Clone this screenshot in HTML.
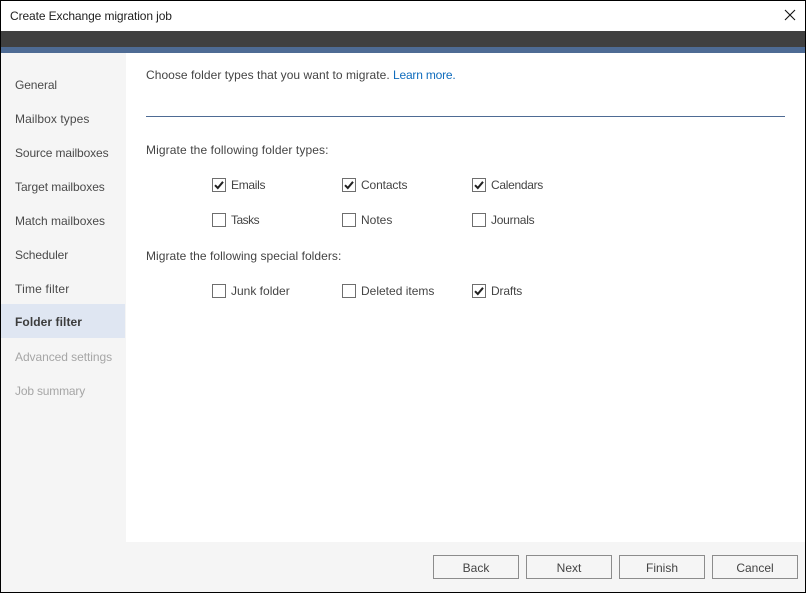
<!DOCTYPE html>
<html>
<head>
<meta charset="utf-8">
<style>
html,body{margin:0;padding:0;background:#fff}
body{width:806px;height:593px;position:relative;overflow:hidden;font-family:"Liberation Sans",sans-serif;font-size:12px;color:#444}
div,span{position:absolute;white-space:nowrap}
.t{line-height:16px;height:16px}
.nav{left:15px;line-height:16px;height:16px;color:#4a4a4a}
.dis{color:#a6a6a6}
.cb{width:12px;height:12px;border:1px solid #6e6e6e;background:#fff}
.cb svg{position:absolute;left:0;top:0}
.btn{top:555px;width:84px;height:22px;border:1px solid #8c8c8c;background:#f5f5f5;text-align:center;line-height:24px;color:#444}
</style>
</head>
<body>
<div style="left:0;top:0;width:804px;height:591px;border:1px solid #000;background:#fff"></div>
<div style="left:1px;top:31px;width:804px;height:16px;background:#404040"></div>
<div style="left:1px;top:47px;width:804px;height:6px;background:#4e6b94"></div>
<div style="left:1px;top:53px;width:125px;height:539px;background:#f5f5f5"></div>
<div style="left:1px;top:542px;width:804px;height:50px;background:#f5f5f5"></div>
<div style="left:1px;top:304px;width:124px;height:34px;background:#dfe6f2"></div>

<div class="t" style="left:10px;top:8px;color:#222;letter-spacing:-0.1px">Create Exchange migration job</div>
<svg style="position:absolute;left:784px;top:9px" width="12" height="12" viewBox="0 0 12 12"><path d="M1 1L11 11M11 1L1 11" stroke="#111" stroke-width="1.1" fill="none"/></svg>

<div class="nav" style="top:77px;letter-spacing:-0.1px">General</div>
<div class="nav" style="top:111px;letter-spacing:0.08px">Mailbox types</div>
<div class="nav" style="top:145px;letter-spacing:-0.12px">Source mailboxes</div>
<div class="nav" style="top:179px;letter-spacing:-0.06px">Target mailboxes</div>
<div class="nav" style="top:213px">Match mailboxes</div>
<div class="nav" style="top:247px;letter-spacing:-0.1px">Scheduler</div>
<div class="nav" style="top:281px;letter-spacing:0.2px">Time filter</div>
<div class="nav" style="top:314px;font-weight:bold;color:#3c3c3c;letter-spacing:0.08px">Folder filter</div>
<div class="nav dis" style="top:349px;letter-spacing:-0.06px">Advanced settings</div>
<div class="nav dis" style="top:383px;letter-spacing:-0.18px">Job summary</div>

<div class="t" style="left:146px;top:67px;letter-spacing:0.05px">Choose folder types that you want to migrate.</div>
<div class="t" style="left:393px;top:67px;color:#0f6cbd;letter-spacing:-0.2px">Learn more.</div>
<div style="left:146px;top:116px;width:639px;height:1px;background:#4e6b94"></div>

<div class="t" style="left:146px;top:142px;letter-spacing:0.11px">Migrate the following folder types:</div>
<div class="t" style="left:146px;top:248px;letter-spacing:0.05px">Migrate the following special folders:</div>

<div class="cb" style="left:212px;top:178px"><svg width="12" height="12" viewBox="0 0 12 12"><path d="M2 6.2L4.8 9L10 2.8" stroke="#222" stroke-width="2" fill="none"/></svg></div>
<div class="t" style="left:231px;top:177px;letter-spacing:-0.3px">Emails</div>
<div class="cb" style="left:342px;top:178px"><svg width="12" height="12" viewBox="0 0 12 12"><path d="M2 6.2L4.8 9L10 2.8" stroke="#222" stroke-width="2" fill="none"/></svg></div>
<div class="t" style="left:361px;top:177px;letter-spacing:-0.12px">Contacts</div>
<div class="cb" style="left:472px;top:178px"><svg width="12" height="12" viewBox="0 0 12 12"><path d="M2 6.2L4.8 9L10 2.8" stroke="#222" stroke-width="2" fill="none"/></svg></div>
<div class="t" style="left:491px;top:177px;letter-spacing:-0.3px">Calendars</div>

<div class="cb" style="left:212px;top:213px"></div>
<div class="t" style="left:231px;top:212px;letter-spacing:-0.5px">Tasks</div>
<div class="cb" style="left:342px;top:213px"></div>
<div class="t" style="left:361px;top:212px">Notes</div>
<div class="cb" style="left:472px;top:213px"></div>
<div class="t" style="left:491px;top:212px;letter-spacing:-0.25px">Journals</div>

<div class="cb" style="left:212px;top:284px"></div>
<div class="t" style="left:231px;top:283px">Junk folder</div>
<div class="cb" style="left:342px;top:284px"></div>
<div class="t" style="left:361px;top:283px">Deleted items</div>
<div class="cb" style="left:472px;top:284px"><svg width="12" height="12" viewBox="0 0 12 12"><path d="M2 6.2L4.8 9L10 2.8" stroke="#222" stroke-width="2" fill="none"/></svg></div>
<div class="t" style="left:491px;top:283px;letter-spacing:-0.15px">Drafts</div>

<div class="btn" style="left:433px">Back</div>
<div class="btn" style="left:526px">Next</div>
<div class="btn" style="left:619px">Finish</div>
<div class="btn" style="left:712px">Cancel</div>
</body>
</html>
